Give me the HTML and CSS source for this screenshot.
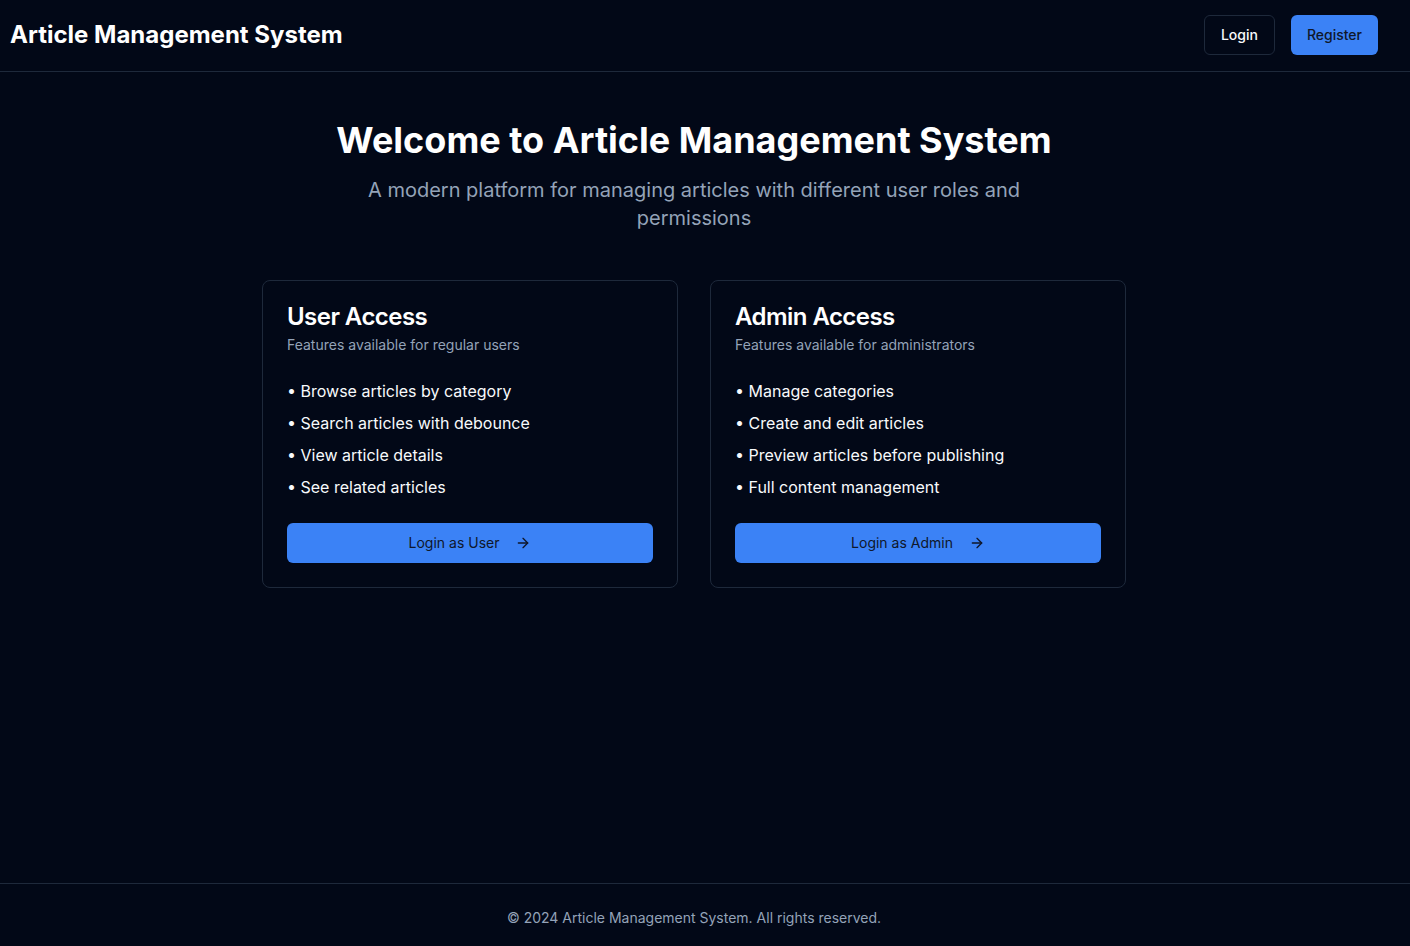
FILE: index.html
```html
<!DOCTYPE html>
<html lang="en">
<head>
<meta charset="utf-8">
<title>Article Management System</title>
<link rel="stylesheet" href="styles.css">
</head>
<body>
<div class="page">
  <header class="topbar">
    <div class="brand">Article Management System</div>
    <nav class="actions">
      <a class="btn btn-outline">Login</a>
      <a class="btn btn-primary">Register</a>
    </nav>
  </header>
  <main class="main">
    <section class="hero">
      <h1 class="hero-title">Welcome to Article Management System</h1>
      <p class="hero-sub">A modern platform for managing articles with different user roles and permissions</p>
    </section>
    <section class="cards">
      <div class="card">
        <div class="card-header">
          <h2 class="card-title">User Access</h2>
          <p class="card-desc">Features available for regular users</p>
        </div>
        <div class="card-content">
          <ul class="features">
            <li>• Browse articles by category</li>
            <li>• Search articles with debounce</li>
            <li>• View article details</li>
            <li>• See related articles</li>
          </ul>
          <a class="btn btn-primary btn-block">Login as User
            <svg class="arrow" viewBox="0 0 24 24" width="16" height="16" fill="none" stroke="currentColor" stroke-width="2" stroke-linecap="round" stroke-linejoin="round"><path d="M5 12h14"/><path d="m12 5 7 7-7 7"/></svg>
          </a>
        </div>
      </div>
      <div class="card">
        <div class="card-header">
          <h2 class="card-title">Admin Access</h2>
          <p class="card-desc">Features available for administrators</p>
        </div>
        <div class="card-content">
          <ul class="features">
            <li>• Manage categories</li>
            <li>• Create and edit articles</li>
            <li>• Preview articles before publishing</li>
            <li>• Full content management</li>
          </ul>
          <a class="btn btn-primary btn-block">Login as Admin
            <svg class="arrow" viewBox="0 0 24 24" width="16" height="16" fill="none" stroke="currentColor" stroke-width="2" stroke-linecap="round" stroke-linejoin="round"><path d="M5 12h14"/><path d="m12 5 7 7-7 7"/></svg>
          </a>
        </div>
      </div>
    </section>
  </main>
  <footer class="footer">© 2024 Article Management System. All rights reserved.</footer>
</div>
</body>
</html>
```
FILE: styles.css
```css
* { box-sizing: border-box; }
html, body { margin: 0; padding: 0; }
body {
  background: #020817;
  color: #f8fafc;
  font-family: Inter, "Noto Sans", "Liberation Sans", sans-serif;
  -webkit-font-smoothing: antialiased;
}
.page {
  min-height: 100vh;
  display: flex;
  flex-direction: column;
}
.topbar {
  height: 72px;
  border-bottom: 1px solid #1e293b;
  display: flex;
  align-items: center;
  justify-content: space-between;
  padding: 0 32px 1px 10px;
}
.brand {
  font-size: 24px;
  font-weight: 700;
  line-height: 32px;
  color: #ffffff;
}
.actions {
  display: flex;
  gap: 16px;
}
.btn {
  display: inline-flex;
  align-items: center;
  justify-content: center;
  height: 40px;
  padding: 0 16px;
  border-radius: 6px;
  font-size: 14px;
  font-weight: 500;
  line-height: 20px;
  text-decoration: none;
  cursor: pointer;
}
.btn-outline {
  border: 1px solid #1e293b;
  background: #020817;
  color: #f8fafc;
}
.btn-primary {
  background: #3b82f6;
  color: #0f172a;
  border: 0;
}
.main {
  flex: 1;
  padding: 48px 38px 48px 16px;
}
.hero {
  text-align: center;
  margin-bottom: 48px;
}
.hero-title {
  margin: 0 0 16px;
  font-size: 36px;
  line-height: 40px;
  font-weight: 700;
  color: #ffffff;
}
.hero-sub {
  margin: 0 auto;
  max-width: 672px;
  font-size: 20px;
  line-height: 28px;
  color: #94a3b8;
}
.cards {
  max-width: 864px;
  margin: 0 auto;
  display: grid;
  grid-template-columns: 1fr 1fr;
  gap: 32px;
}
.card {
  border: 1px solid #1e293b;
  border-radius: 8px;
  background: #020817;
}
.card-header {
  padding: 24px;
  display: flex;
  flex-direction: column;
  gap: 6px;
}
.card-title {
  margin: 0;
  font-size: 24px;
  line-height: 24px;
  font-weight: 600;
  letter-spacing: -0.55px;
  color: #ffffff;
}
.card-desc {
  margin: 0;
  font-size: 14px;
  line-height: 20px;
  color: #94a3b8;
}
.card-content {
  padding: 0 24px 24px;
}
.features {
  list-style: none;
  margin: 0 0 24px;
  padding: 0;
  display: flex;
  flex-direction: column;
  gap: 8px;
}
.features li {
  font-size: 16px;
  line-height: 24px;
  color: #f8fafc;
}
.btn-block {
  display: flex;
  width: 100%;
  font-weight: 400;
}
.arrow {
  margin-left: 16px;
}
.footer {
  border-top: 1px solid #1e293b;
  padding: 24px 22px 18px 0;
  text-align: center;
  font-size: 14px;
  line-height: 20px;
  color: #94a3b8;
}
```
